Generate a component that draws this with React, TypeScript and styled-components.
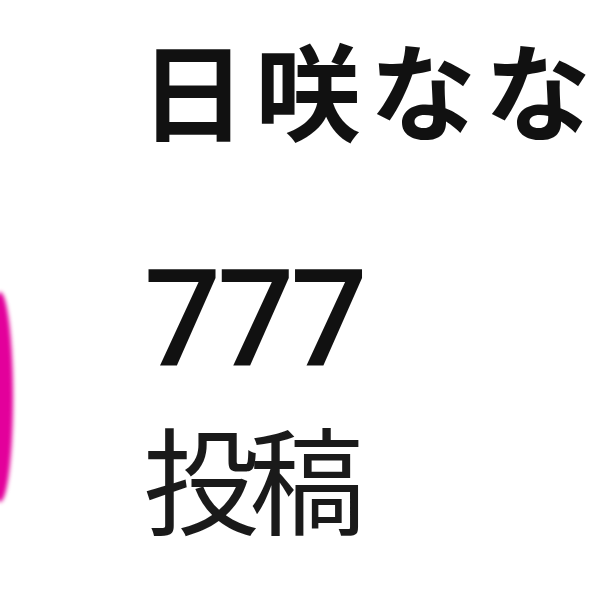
import styled, { createGlobalStyle } from 'styled-components';

const GlobalStyle = createGlobalStyle`
  html, body {
    margin: 0;
    padding: 0;
    background: #ffffff;
  }
  body {
    width: 600px;
    height: 600px;
    overflow: hidden;
    font-family: "Noto Sans CJK JP", "Noto Sans", sans-serif;
  }
`;

const Profile = styled.div`
  display: flex;
  width: 600px;
  height: 600px;
  background: #fff;
  overflow: hidden;
`;

const AvatarColumn = styled.div`
  display: flex;
  align-items: flex-start;
  width: 148px;
  padding-top: 292px;
`;

const StoryRing = styled.div`
  width: 26px;
  height: 210px;
  margin-left: -13px;
  border-radius: 50%;
  background: #e3009b;
  filter: blur(2px);
`;

const Info = styled.div`
  display: flex;
  flex-direction: column;
  padding-top: 34px;
`;

const Name = styled.h1`
  margin: 0 0 0 -4px;
  font-family: "Noto Sans CJK JP", sans-serif;
  font-size: 106px;
  font-weight: 700;
  line-height: 1;
  color: #111;
  white-space: nowrap;
  letter-spacing: 9px;
`;

const Stat = styled.div`
  display: flex;
  flex-direction: column;
  margin-top: 112px;
`;

const Count = styled.span`
  font-family: Roboto, "Liberation Sans", sans-serif;
  font-size: 136px;
  font-weight: 500;
  line-height: 1;
  letter-spacing: -4px;
  color: #111;
`;

const Label = styled.span`
  margin-top: 29px;
  margin-left: -1px;
  font-family: "Noto Sans CJK JP", sans-serif;
  font-size: 116px;
  font-weight: 400;
  line-height: 1;
  letter-spacing: -10px;
  color: #1a1a1a;
`;

export default function App() {
  return (
    <>
      <GlobalStyle />
      <Profile>
        <AvatarColumn>
          <StoryRing />
        </AvatarColumn>
        <Info>
          <Name>日咲なな</Name>
          <Stat>
            <Count>777</Count>
            <Label>投稿</Label>
          </Stat>
        </Info>
      </Profile>
    </>
  );
}
